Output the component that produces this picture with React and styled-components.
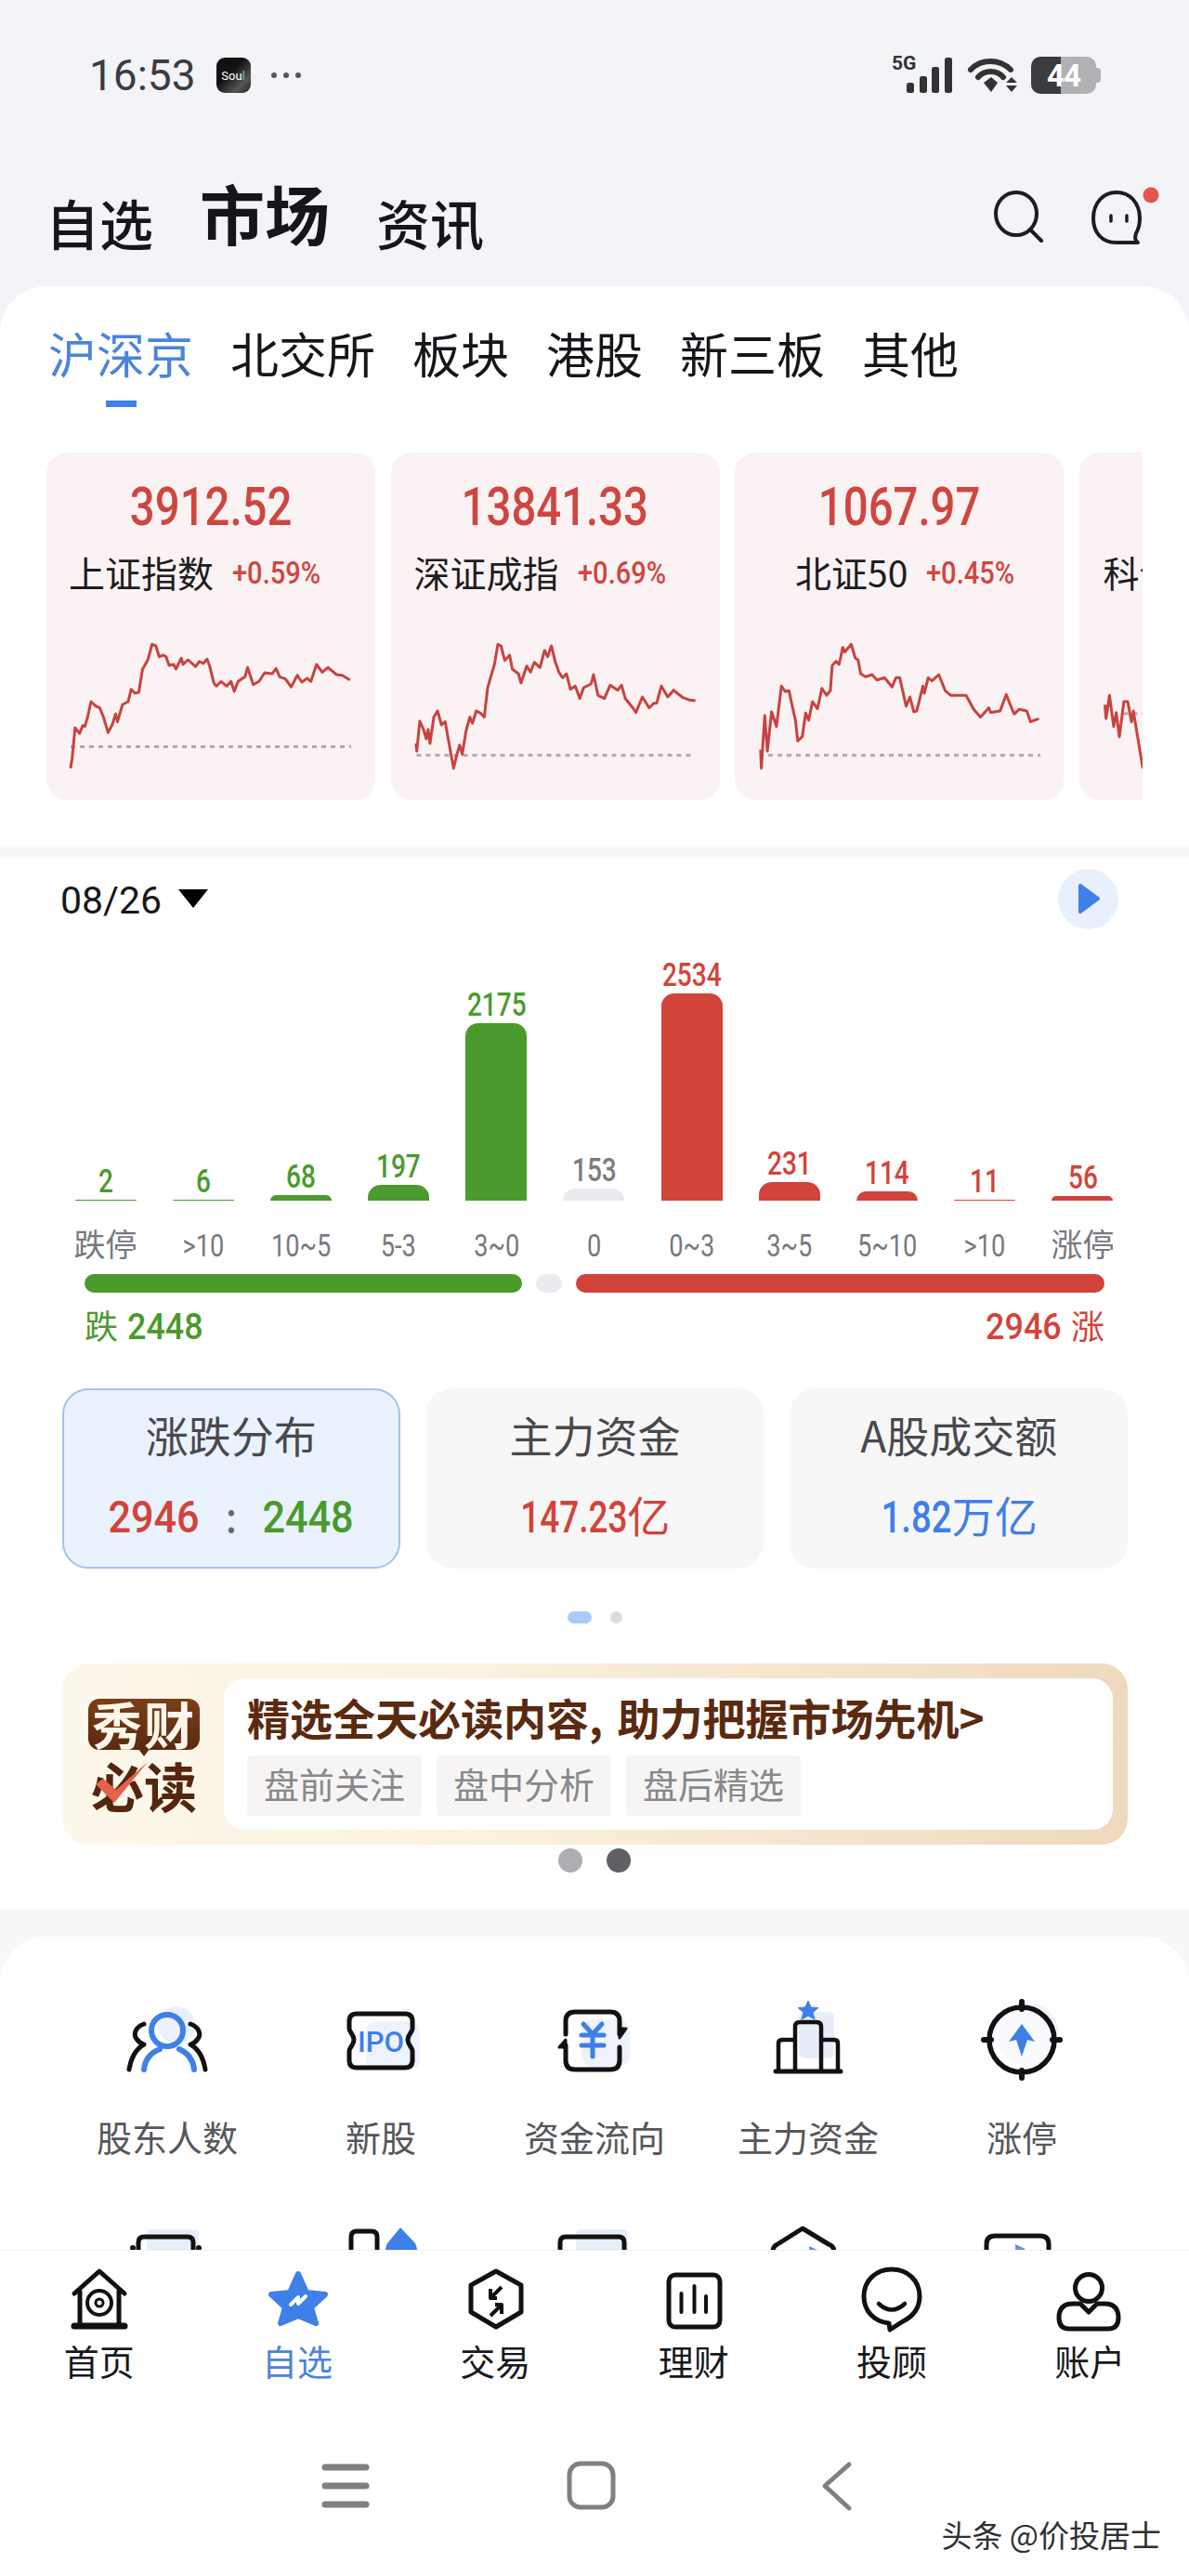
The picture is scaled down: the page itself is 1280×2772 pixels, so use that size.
import React from "react";
import styled, { createGlobalStyle } from "styled-components";

const BLUE = "#3f7fe8";
const RED = "#cf4640";
const GREEN = "#4a9a2d";
const INK = "#14161a";
const CJK = `"Noto Sans CJK SC", "Noto Sans", sans-serif`;
const NUM = `Roboto, "Noto Sans CJK SC", sans-serif`;

const GlobalStyle = createGlobalStyle`
  html, body {
    margin: 0;
    padding: 0;
    background: #fff;
  }
  * {
    box-sizing: border-box;
  }
`;

const Page = styled.div`
  position: relative;
  display: flex;
  flex-direction: column;
  width: 1280px;
  height: 2772px;
  overflow: hidden;
  background: #f2f4f8;
  font-family: ${CJK};
  color: ${INK};
`;

// the app's digits are a narrow DIN style face, none is installed so squeeze Roboto
const Condensed = styled.span`
  display: inline-block;
  transform: scaleX(${(p) => p.$x});
  transform-origin: ${(p) => p.$origin || "center"};
  margin: 0 ${(p) => -(p.$trim || 0)}px;
  font-family: ${NUM};
  font-weight: 500;
`;

const StatusBar = styled.div`
  display: flex;
  align-items: center;
  justify-content: space-between;
  height: 162px;
  padding: 0 100px 0 96px;
`;

const StatusSide = styled.div`
  display: flex;
  align-items: center;
`;

const Clock = styled.span`
  font-family: Roboto, sans-serif;
  font-size: 46px;
  line-height: 50px;
  color: #3a3c40;
`;

const SoulIcon = styled.span`
  display: flex;
  align-items: center;
  justify-content: center;
  width: 37px;
  height: 38px;
  margin-left: 22px;
  border-radius: 9px;
  background: linear-gradient(135deg, #111 40%, #555 75%, #222);
  color: #fff;
  font-family: Roboto, sans-serif;
  font-size: 13px;
  b {
    font-weight: 400;
    color: #3ed6b8;
  }
`;

const StatusDots = styled.span`
  display: flex;
  gap: 7px;
  margin-left: 22px;
  i {
    width: 6px;
    height: 6px;
    border-radius: 50%;
    background: #55575b;
  }
`;

const FiveG = styled.span`
  align-self: flex-start;
  width: 30px;
  margin-right: -14px;
  margin-top: -4px;
  font-family: Roboto, sans-serif;
  font-weight: 700;
  font-size: 21px;
  line-height: 22px;
  color: #333;
`;

const Battery = styled.span`
  position: relative;
  display: flex;
  align-items: center;
  justify-content: center;
  width: 70px;
  height: 40px;
  margin-left: 14px;
  border-radius: 10px;
  background: linear-gradient(90deg, #3b3c3f 46%, #b0b1b3 46%);
  color: #fff;
  font-family: Roboto, sans-serif;
  font-weight: 700;
  font-size: 33px;
  letter-spacing: -1px;
  &::after {
    content: "";
    position: absolute;
    right: -5px;
    top: 12px;
    width: 5px;
    height: 16px;
    border-radius: 0 4px 4px 0;
    background: #b0b1b3;
  }
`;

const Header = styled.div`
  display: flex;
  align-items: flex-end;
  height: 146px;
  padding: 0 41px 39px 49px;
`;

const HeaderTab = styled.span`
  font-size: ${(p) => (p.$active ? "70px" : "58px")};
  font-weight: ${(p) => (p.$active ? 700 : 500)};
  line-height: ${(p) => (p.$active ? "72px" : "60px")};
  margin-right: 50px;
  margin-bottom: ${(p) => (p.$active ? "4px" : "0")};
`;

const HeaderIcons = styled.div`
  display: flex;
  gap: 52px;
  margin-left: auto;
  margin-bottom: 4px;
`;

const IconFrame = styled.svg`
  display: block;
  flex: none;
  overflow: visible;
`;

const Sheet = styled.div`
  height: 603px;
  border-radius: 50px 50px 0 0;
  background: #fff;
`;

const MarketTabs = styled.div`
  display: flex;
  gap: 40px;
  padding: 47px 0 0 52px;
`;

const MarketTab = styled.div`
  display: flex;
  flex-direction: column;
  align-items: center;
  font-size: 52px;
  line-height: 50px;
  color: ${(p) => (p.$active ? "#4a84dc" : INK)};
  &::after {
    content: "";
    width: 33px;
    height: 7px;
    margin-top: 26px;
    background: ${(p) => (p.$active ? BLUE : "transparent")};
  }
`;

const IndexStrip = styled.div`
  display: flex;
  gap: 16.5px;
  width: 1180px;
  margin: 49px 0 0 50px;
  overflow: hidden;
`;

const IndexCard = styled.div`
  flex: none;
  width: 354px;
  height: 374px;
  padding-top: 21px;
  border-radius: 22px;
  background: #fbf2f3;
`;

const IndexValue = styled.div`
  height: 64px;
  text-align: center;
  font-size: 57px;
  line-height: 64px;
  color: ${RED};
`;

const IndexRow = styled.div`
  display: flex;
  align-items: center;
  gap: 20px;
  height: 44px;
  margin: 21px 0 3px;
  padding-left: ${(p) => p.$inset}px;
  white-space: nowrap;
`;

const IndexName = styled.span`
  font-size: 39px;
  line-height: 44px;
  color: #1c1d20;
`;

const IndexPct = styled.span`
  font-size: 33px;
  line-height: 44px;
  color: ${RED};
`;

const Band = styled.div`
  height: ${(p) => p.$h}px;
  background: #f8f8f8;
`;

const Board = styled.div`
  padding-bottom: 39px;
  background: #fff;
`;

const DateRow = styled.div`
  display: flex;
  align-items: center;
  height: 88px;
  padding: 0 76px 0 65px;
`;

const DateText = styled.span`
  margin-top: 3px;
  font-family: Roboto, sans-serif;
  font-size: 41px;
  color: #15171a;
`;

const DateCaret = styled.span`
  width: 0;
  height: 0;
  margin-left: 18px;
  border-left: 16px solid transparent;
  border-right: 16px solid transparent;
  border-top: 20px solid #000;
`;

const PlayButton = styled.span`
  display: flex;
  align-items: center;
  justify-content: center;
  width: 65px;
  height: 65px;
  margin-left: auto;
  border-radius: 50%;
  background: #e8f0fd;
`;

const BarGrid = styled.div`
  display: grid;
  grid-template-columns: repeat(11, 1fr);
  width: 1157px;
  margin-left: 61px;
`;

const BarColumn = styled.div`
  display: flex;
  flex-direction: column;
  align-items: center;
  justify-content: flex-end;
  height: 281px;
`;

const toneColor = (tone) => (tone === "up" ? "#d2433a" : tone === "down" ? GREEN : "#7a7c80");

const BarValue = styled.span`
  font-size: 35px;
  line-height: 38px;
  color: ${(p) => toneColor(p.$tone)};
`;

const Bar = styled.div`
  width: 66px;
  height: ${(p) => p.$h}px;
  border-radius: 14px 14px 0 0;
  background: ${(p) => (p.$tone === "flat" ? "#e9ebef" : toneColor(p.$tone))};
`;

const BarLabel = styled.span`
  height: 48px;
  margin-top: 22px;
  text-align: center;
  font-size: 34px;
  line-height: 48px;
  color: #77797d;
  ${Condensed} {
    font-weight: 400;
  }
`;

const Ratio = styled.div`
  display: flex;
  gap: 15px;
  height: 20px;
  margin: 9px 91px 0;
`;

const RatioPart = styled.div`
  flex: ${(p) => p.$grow} 0 0;
  border-radius: 10px;
  background: ${(p) => p.$color};
`;

const Totals = styled.div`
  display: flex;
  justify-content: space-between;
  height: 44px;
  margin: 11px 91px 0;
  font-size: 39px;
  line-height: 44px;
`;

const Total = styled.span`
  color: ${(p) => toneColor(p.$tone)};
  span {
    font-size: 36px;
  }
  ${Condensed} {
    font-size: 39px;
    margin: 0 10px;
  }
`;

const Metrics = styled.div`
  display: grid;
  grid-template-columns: repeat(3, 1fr);
  gap: 28px;
  margin: 48px 66px 0 67px;
`;

const Metric = styled.div`
  height: 194px;
  padding-top: 17px;
  border: 2px solid ${(p) => (p.$active ? "#a3c2ea" : "transparent")};
  border-radius: 28px;
  background: ${(p) => (p.$active ? "#eaf2fe" : "#f7f7f7")};
  text-align: center;
`;

const MetricTitle = styled.div`
  font-size: 46px;
  line-height: 60px;
  color: #48494d;
`;

const MetricValue = styled.div`
  margin-top: 28px;
  font-size: 46px;
  line-height: 56px;
  color: ${(p) => (p.$color ? p.$color : "#d2433a")};
  ${Condensed} {
    font-size: 48px;
  }
`;

const RatioMark = styled.span`
  margin: 0 22px;
  color: #666;
`;

const ToneText = styled.span`
  color: ${(p) => toneColor(p.$tone)};
`;

const Pager = styled.div`
  display: flex;
  justify-content: center;
  gap: ${(p) => p.$gap}px;
  margin-top: ${(p) => p.$top}px;
`;

const PagerDot = styled.span`
  width: ${(p) => p.$w}px;
  height: ${(p) => p.$h}px;
  border-radius: ${(p) => p.$h / 2}px;
  background: ${(p) => p.$color};
`;

const Banner = styled.div`
  display: flex;
  height: 195px;
  margin: 43px 66px 0 67px;
  padding: 16px 16px 16px 28px;
  border-radius: 28px;
  background: linear-gradient(90deg, #fdf8ec, #fbf1de 40%, #eed9bd);
`;

const Logo = styled.div`
  position: relative;
  flex: none;
  width: 120px;
  margin: 22px 26px 0 0;
  text-align: center;
  font-weight: 700;
`;

const LogoTop = styled.div`
  position: relative;
  height: 55px;
  border-radius: 12px;
  background: linear-gradient(180deg, #7a3f18, #5a2a10);
  color: #fff6ea;
  font-size: 54px;
  line-height: 53px;
  letter-spacing: 2px;
  white-space: nowrap;
  &::after {
    content: "";
    position: absolute;
    left: 50%;
    bottom: -7px;
    margin-left: -6px;
    width: 0;
    height: 0;
    border-left: 6px solid transparent;
    border-right: 6px solid transparent;
    border-top: 8px solid #5a2a10;
  }
`;

const LogoBottom = styled.div`
  margin-top: 8px;
  color: #54260f;
  font-size: 57px;
  line-height: 58px;
  white-space: nowrap;
`;

const LogoCheck = styled.svg`
  position: absolute;
  left: 4px;
  top: 62px;
`;

const BannerBody = styled.div`
  flex: 1;
  padding: 13px 0 0 25px;
  border-radius: 22px;
  background: #fff;
`;

const BannerTitle = styled.div`
  font-size: 46px;
  font-weight: 700;
  line-height: 56px;
  word-spacing: 5px;
  color: #5a2a10;
  white-space: nowrap;
`;

const Chips = styled.div`
  display: flex;
  gap: 16px;
  margin-top: 14px;
`;

const Chip = styled.span`
  width: 188px;
  height: 65px;
  border-radius: 4px;
  background: #f7f5f4;
  text-align: center;
  font-size: 38px;
  line-height: 60px;
  color: #87888c;
`;

const Tools = styled.div`
  flex: 1;
  min-height: 0;
  padding-top: 30px;
  overflow: hidden;
  background: #f8f8f8;
`;

const ToolSheet = styled.div`
  display: grid;
  grid-template-columns: repeat(5, 230px);
  row-gap: 65px;
  justify-items: center;
  padding: 67px 65px 0;
  border-radius: 50px 50px 0 0;
  background: #fff;
`;

const Tool = styled.div`
  display: flex;
  flex-direction: column;
  align-items: center;
`;

const ToolLabel = styled.span`
  margin-top: 33px;
  font-size: 38px;
  line-height: 50px;
  color: #55575b;
  white-space: nowrap;
`;

const Nav = styled.div`
  display: grid;
  grid-template-columns: repeat(6, 1fr);
  height: 170px;
  padding-top: 16px;
  border-top: 1px solid #eef0f3;
  background: #fff;
`;

const NavItem = styled.div`
  display: flex;
  flex-direction: column;
  align-items: center;
`;

const NavLabel = styled.span`
  margin-top: -3px;
  font-size: 38px;
  line-height: 50px;
  color: ${(p) => (p.$active ? "#4a84dc" : "#17181b")};
`;

const SystemBar = styled.div`
  display: flex;
  justify-content: center;
  gap: 204px;
  height: 181px;
  padding: 53px 8px 0 0;
  background: #fff;
`;

const Watermark = styled.span`
  position: absolute;
  right: 30px;
  bottom: 25px;
  font-size: 33px;
  line-height: 40px;
  color: #2e3033;
  white-space: nowrap;
`;

// points read off the reference, x is scaled to page px later
const line1 = [[88,560],[92,530],[100,430],[112,448],[120,422],[126,425],[133,395],[142,345],[155,360],[165,365],[175,395],[187,445],[198,420],[207,385],[212,410],[225,355],[240,345],[248,305],[258,318],[268,315],[278,240],[292,210],[303,160],[313,165],[322,200],[333,195],[340,200],[348,228],[360,225],[366,240],[380,205],[385,225],[398,210],[418,232],[428,215],[438,222],[448,208],[455,230],[466,285],[473,295],[485,280],[500,295],[511,280],[520,312],[530,280],[548,265],[555,235],[570,290],[585,280],[600,252],[620,255],[630,238],[640,265],[655,272],[670,298],[686,260],[698,282],[712,270],[722,280],[737,225],[752,250],[767,235],[790,258],[805,260],[825,275]];
const line2 = [[998,480],[1000,505],[1008,408],[1018,435],[1025,465],[1030,435],[1035,480],[1045,395],[1055,375],[1065,420],[1075,410],[1085,480],[1097,560],[1105,520],[1113,485],[1120,515],[1130,440],[1140,395],[1147,415],[1157,375],[1168,382],[1178,395],[1187,300],[1195,265],[1205,225],[1214,160],[1222,165],[1232,212],[1245,195],[1252,240],[1268,255],[1275,285],[1290,230],[1300,250],[1310,218],[1325,235],[1337,180],[1345,200],[1355,165],[1365,215],[1375,250],[1385,268],[1395,255],[1405,305],[1418,295],[1430,335],[1440,300],[1460,288],[1466,258],[1478,325],[1495,335],[1510,292],[1530,308],[1540,292],[1550,335],[1570,365],[1578,380],[1595,330],[1613,365],[1625,350],[1633,350],[1645,295],[1662,330],[1677,308],[1702,332],[1720,340],[1735,342]];
const line3 = [[1908,500],[1910,560],[1919,390],[1926,505],[1937,378],[1950,425],[1963,295],[1973,312],[1983,310],[1990,350],[2000,405],[2006,472],[2018,458],[2027,382],[2035,405],[2045,345],[2058,368],[2070,302],[2082,325],[2092,310],[2097,228],[2107,215],[2115,225],[2125,170],[2130,185],[2147,160],[2158,205],[2165,210],[2172,255],[2185,265],[2202,258],[2215,275],[2235,268],[2255,298],[2265,268],[2275,268],[2292,360],[2302,330],[2312,378],[2320,375],[2336,295],[2340,318],[2350,268],[2360,278],[2378,258],[2395,310],[2410,325],[2450,325],[2470,370],[2488,395],[2510,365],[2515,380],[2540,375],[2556,322],[2565,350],[2577,385],[2590,370],[2610,375],[2620,410],[2642,400]];
const line4 = [[2815,355],[2818,400],[2827,325],[2838,425],[2845,380],[2853,458],[2865,345],[2875,345],[2885,410],[2890,375],[2900,450],[2915,560]];

const indexCards = [
  { value: "3912.52", name: "上证指数", pct: "+0.59%", inset: 24, left: 50, line: line1, base: 803.5, dash: [76, 378] },
  { value: "13841.33", name: "深证成指", pct: "+0.69%", inset: 25, left: 420.5, line: line2, base: 812.7, dash: [448, 748] },
  { value: "1067.97", name: "北证50", pct: "+0.45%", inset: 65, left: 791, line: line3, base: 812.7, dash: [827, 1120] },
  { name: "科创综指", inset: 26, left: 1161.5, line: line4, base: 768, dash: [1209, 1500] },
];

const Spark = ({ card }) => {
  const pts = card.line.map(([x, y]) => `${(40 + x / 2.45 - card.left).toFixed(1)},${(y / 3).toFixed(1)}`).join(" ");
  const by = card.base - 640;
  return (
    <IconFrame width="354" height="220" viewBox="0 0 354 220" style={{ overflow: "hidden" }}>
      <line x1={card.dash[0] - card.left} x2={card.dash[1] - card.left} y1={by} y2={by} stroke="#a9abb0" strokeWidth="3" strokeDasharray="5 5" />
      <polyline points={pts} fill="none" stroke="#c8433f" strokeWidth="3" strokeLinejoin="round" />
    </IconFrame>
  );
};

const bars = [
  { value: "2", label: "跌停", h: 1, tone: "down", cjk: true },
  { value: "6", label: ">10", h: 1, tone: "down" },
  { value: "68", label: "10~5", h: 6, tone: "down" },
  { value: "197", label: "5-3", h: 17, tone: "down" },
  { value: "2175", label: "3~0", h: 191, tone: "down" },
  { value: "153", label: "0", h: 13, tone: "flat" },
  { value: "2534", label: "0~3", h: 223, tone: "up" },
  { value: "231", label: "3~5", h: 20, tone: "up" },
  { value: "114", label: "5~10", h: 10, tone: "up" },
  { value: "11", label: ">10", h: 1, tone: "up" },
  { value: "56", label: "涨停", h: 5, tone: "up", cjk: true },
];

const stroke = { fill: "none", stroke: "#111", strokeWidth: 5, strokeLinecap: "round", strokeLinejoin: "round" };
const blueStroke = { ...stroke, stroke: BLUE };

const ToolIcon = ({ children }) => (
  <IconFrame width="100" height="90" viewBox="0 0 100 90">{children}</IconFrame>
);

const NavIcon = ({ children }) => (
  <IconFrame width="80" height="80" viewBox="0 0 80 80">{children}</IconFrame>
);

const SearchIcon = () => (
  <IconFrame width="54" height="56" viewBox="0 0 54 56">
    <ellipse cx="25" cy="25" rx="22" ry="23" {...stroke} stroke="#1c1d20" strokeWidth="4" />
    <path d="M40 42 L52 54" {...stroke} stroke="#1c1d20" strokeWidth="4" />
  </IconFrame>
);

const ChatIcon = () => (
  <IconFrame width="64" height="60" viewBox="0 0 64 60">
    <path d="M27 2 C12 2 2 14 2 30 C2 46 12 56 26 56 L50 56 C46 53 47 50 48 46 C51 41 52 36 52 30 C52 14 42 2 27 2 Z" {...stroke} stroke="#1c1d20" strokeWidth="4" />
    <path d="M21 27 V33 M38 27 V33" {...stroke} stroke="#1c1d20" strokeWidth="3.5" />
    <circle cx="64" cy="5" r="8.5" fill="#e8544e" />
  </IconFrame>
);

const SignalIcon = () => (
  <IconFrame width="50" height="38" viewBox="0 0 50 38">
    <rect x="0" y="27" width="8" height="11" rx="2.5" fill="#333" />
    <rect x="14" y="20" width="8" height="18" rx="2.5" fill="#333" />
    <rect x="27" y="10" width="8" height="28" rx="2.5" fill="#333" />
    <rect x="41" y="0" width="8" height="38" rx="2.5" fill="#333" />
  </IconFrame>
);

const WifiIcon = () => (
  <IconFrame width="54" height="38" viewBox="0 0 54 38" style={{ marginLeft: 16 }}>
    <path d="M3 13 C14 1 34 1 46 13" fill="none" stroke="#333" strokeWidth="6" strokeLinecap="round" />
    <path d="M11 21 C18 13 31 13 38 21" fill="none" stroke="#333" strokeWidth="6" strokeLinecap="round" />
    <path d="M17 27 L25 21 L32 27 L25 37 Z" fill="#333" />
    <path d="M47 21 L53 27 H41 Z M41 30 H53 L47 37 Z" fill="#333" />
  </IconFrame>
);

const App = () => (
  <Page>
    <GlobalStyle />
    <StatusBar>
      <StatusSide>
        <Clock>16:53</Clock>
        <SoulIcon>Sou<b>l</b></SoulIcon>
        <StatusDots><i /><i /><i /></StatusDots>
      </StatusSide>
      <StatusSide>
        <FiveG>5G</FiveG>
        <SignalIcon />
        <WifiIcon />
        <Battery>44</Battery>
      </StatusSide>
    </StatusBar>

    <Header>
      <HeaderTab>自选</HeaderTab>
      <HeaderTab $active>市场</HeaderTab>
      <HeaderTab>资讯</HeaderTab>
      <HeaderIcons>
        <SearchIcon />
        <ChatIcon />
      </HeaderIcons>
    </Header>

    <Sheet>
      <MarketTabs>
        <MarketTab $active>沪深京</MarketTab>
        <MarketTab>北交所</MarketTab>
        <MarketTab>板块</MarketTab>
        <MarketTab>港股</MarketTab>
        <MarketTab>新三板</MarketTab>
        <MarketTab>其他</MarketTab>
      </MarketTabs>
      <IndexStrip>
        {indexCards.map((card) => (
          <IndexCard key={card.name}>
            <IndexValue>{card.value && <Condensed $x={0.83}>{card.value}</Condensed>}</IndexValue>
            <IndexRow $inset={card.inset}>
              <IndexName>{card.name}</IndexName>
              {card.pct && (
                <IndexPct>
                  <Condensed $x={0.88} $origin="left">{card.pct}</Condensed>
                </IndexPct>
              )}
            </IndexRow>
            <Spark card={card} />
          </IndexCard>
        ))}
      </IndexStrip>
    </Sheet>
    <Band $h={12} />

    <Board>
      <DateRow>
        <DateText>08/26</DateText>
        <DateCaret />
        <PlayButton>
          <IconFrame width="26" height="34" viewBox="0 0 26 34">
            <path d="M4 3 L23 17 L4 31 Z" fill={BLUE} stroke={BLUE} strokeWidth="4" strokeLinejoin="round" />
          </IconFrame>
        </PlayButton>
      </DateRow>
      <BarGrid>
        {bars.map((b) => (
          <BarColumn key={b.label + b.value}>
            <BarValue $tone={b.tone}>
              <Condensed $x={0.8}>{b.value}</Condensed>
            </BarValue>
            <Bar $h={b.h} $tone={b.tone} />
          </BarColumn>
        ))}
        {bars.map((b) => (
          <BarLabel key={b.value}>
            {b.cjk ? b.label : <Condensed $x={0.8}>{b.label}</Condensed>}
          </BarLabel>
        ))}
      </BarGrid>
      <Ratio>
        <RatioPart $grow={472} $color={GREEN} />
        <RatioPart $grow={28} $color="#e9ebef" />
        <RatioPart $grow={570} $color="#d2433a" />
      </Ratio>
      <Totals>
        <Total $tone="down"><span>跌</span><Condensed $x={0.92} $origin="left">2448</Condensed></Total>
        <Total $tone="up"><Condensed $x={0.92} $origin="right">2946</Condensed><span>涨</span></Total>
      </Totals>

      <Metrics>
        <Metric $active>
          <MetricTitle>涨跌分布</MetricTitle>
          <MetricValue>
            <ToneText $tone="up"><Condensed $x={0.9}>2946</Condensed></ToneText>
            <RatioMark>:</RatioMark>
            <ToneText $tone="down"><Condensed $x={0.9}>2448</Condensed></ToneText>
          </MetricValue>
        </Metric>
        <Metric>
          <MetricTitle>主力资金</MetricTitle>
          <MetricValue><Condensed $x={0.77} $trim={17}>147.23</Condensed>亿</MetricValue>
        </Metric>
        <Metric>
          <MetricTitle>A股成交额</MetricTitle>
          <MetricValue $color={BLUE}><Condensed $x={0.8} $trim={9}>1.82</Condensed>万亿</MetricValue>
        </Metric>
      </Metrics>
      <Pager $gap={20} $top={46}>
        <PagerDot $w={26} $h={13} $color="#a9cbf8" />
        <PagerDot $w={13} $h={13} $color="#dcdcdc" />
      </Pager>

      <Banner>
        <Logo>
          <LogoTop>秀财</LogoTop>
          <LogoBottom>必读</LogoBottom>
          <LogoCheck width="66" height="58" viewBox="0 0 66 58">
            <path d="M4 30 L24 50 L60 6 L26 36 L12 24 Z" fill="#e5614c" />
          </LogoCheck>
        </Logo>
        <BannerBody>
          <BannerTitle>精选全天必读内容, 助力把握市场先机&gt;</BannerTitle>
          <Chips>
            <Chip>盘前关注</Chip>
            <Chip>盘中分析</Chip>
            <Chip>盘后精选</Chip>
          </Chips>
        </BannerBody>
      </Banner>
      <Pager $gap={26} $top={4}>
        <PagerDot $w={26} $h={26} $color="#adadb2" />
        <PagerDot $w={26} $h={26} $color="#5f6066" />
      </Pager>
    </Board>

    <Tools>
      <ToolSheet>
        <Tool>
          <ToolIcon>
            <circle cx="60" cy="28" r="20" fill="#eaf1fc" />
            <circle cx="50" cy="34" r="17" {...blueStroke} strokeWidth="6" />
            <path d="M25 76 C26 66 32 58 42 54 M63 54 C72 58 78 66 79 76" {...blueStroke} strokeWidth="6" />
            <path d="M25 27 C16 30 13 38 17 43 C19 46 22 48 25 49 C16 54 11 64 9 76" {...stroke} />
            <path d="M75 27 C84 30 87 38 83 43 C81 46 78 48 75 49 C84 54 89 64 91 76" {...stroke} />
          </ToolIcon>
          <ToolLabel>股东人数</ToolLabel>
        </Tool>
        <Tool>
          <ToolIcon>
            <rect x="34" y="24" width="58" height="52" rx="10" fill="#edf2fb" />
            <path d="M24 16 H76 Q84 16 84 24 V32 C84 36 79 38 79 44 C79 50 84 52 84 56 V66 Q84 74 76 74 H24 Q16 74 16 66 V56 C16 52 21 50 21 44 C21 38 16 36 16 32 V24 Q16 16 24 16 Z" {...stroke} />
            <text x="50" y="57" textAnchor="middle" fontFamily="Roboto, sans-serif" fontWeight="500" fontSize="31" textLength="50" lengthAdjust="spacingAndGlyphs" fill={BLUE}>IPO</text>
          </ToolIcon>
          <ToolLabel>新股</ToolLabel>
        </Tool>
        <Tool>
          <ToolIcon>
            <rect x="36" y="22" width="52" height="52" rx="14" fill="#edf2fb" />
            <path d="M19 38 V24 Q19 14 29 14 H67 Q77 14 77 24 V38 M77 52 V66 Q77 76 67 76 H29 Q19 76 19 66 V50" {...stroke} />
            <path d="M77 42 L84 32 H77 Z M19 44 L12 52 H19 Z" fill="#111" stroke="#111" strokeWidth="3" strokeLinejoin="round" />
            <path d="M38 27 L48 38 L58 27 M36 39 H60 M36 50 H60 M48 38 V62" {...blueStroke} strokeWidth="5" />
          </ToolIcon>
          <ToolLabel>资金流向</ToolLabel>
        </Tool>
        <Tool>
          <ToolIcon>
            <rect x="40" y="14" width="38" height="50" rx="6" fill="#e7edf9" />
            <path d="M18 78 V48 Q18 44 22 44 H36 M82 78 V48 Q82 44 78 44 H64 M36 78 V30 Q36 25 41 25 H59 Q64 25 64 30 V78" {...stroke} strokeWidth="4.5" strokeLinecap="butt" />
            <path d="M15 78 H85" {...stroke} strokeWidth="5" />
            <path d="M50 2 L53 9 L61 9.5 L55 14.5 L57 22 L50 18 L43 22 L45 14.5 L39 9.5 L47 9 Z" fill={BLUE} stroke={BLUE} strokeWidth="1" strokeLinejoin="round" />
          </ToolIcon>
          <ToolLabel>主力资金</ToolLabel>
        </Tool>
        <Tool>
          <ToolIcon>
            <circle cx="56" cy="38" r="34" fill="#eef3fb" />
            <circle cx="50" cy="44" r="35" {...stroke} fill="#fff" fillOpacity="0.6" strokeWidth="5.5" />
            <path d="M50 3 V11 M50 77 V85 M9 44 H17 M83 44 H91" {...stroke} strokeWidth="6" />
            <path d="M50 27 L64 46 L56 44 L50 62 L44 44 L36 46 Z" fill={BLUE} />
          </ToolIcon>
          <ToolLabel>涨停</ToolLabel>
        </Tool>

        <Tool>
          <ToolIcon>
            <rect x="28" y="10" width="56" height="30" rx="4" fill="#e7eefb" />
            <path d="M19 50 V24 Q19 18 25 18 H72 Q78 18 78 24 V50" {...stroke} />
            <circle cx="13" cy="30" r="3" fill="#111" />
            <circle cx="84" cy="30" r="3" fill="#111" />
          </ToolIcon>
        </Tool>
        <Tool>
          <ToolIcon>
            <path d="M18 50 V18 Q18 12 24 12 H40 Q46 12 46 18 V50" {...stroke} />
            <path d="M71 8 L87 25 Q90 30 90 50 H54 Q54 30 57 25 Z" fill={BLUE} />
          </ToolIcon>
        </Tool>
        <Tool>
          <ToolIcon>
            <rect x="30" y="10" width="56" height="30" rx="4" fill="#e7eefb" />
            <path d="M13 50 V24 Q13 18 19 18 H76 Q82 18 82 24 V50" {...stroke} />
          </ToolIcon>
        </Tool>
        <Tool>
          <ToolIcon>
            <path d="M12 34 Q12 28 17 26 L44 9 L72 26 Q78 28 78 34 V50" {...stroke} />
            <path d="M12 34 V50" {...stroke} />
            <path d="M51 28 L62 33 L51 38 Z" fill="#6f93c9" />
          </ToolIcon>
        </Tool>
        <Tool>
          <ToolIcon>
            <path d="M12 50 V26 Q12 17 21 17 H70 Q79 17 79 26 V50" {...stroke} />
            <path d="M43 26 L54 31 L43 36 Z" fill="#6f93c9" />
          </ToolIcon>
        </Tool>
      </ToolSheet>
    </Tools>

    <Nav>
      <NavItem>
        <NavIcon>
          <path d="M13 30 L40 6 L67 30 M19 28 V64 M61 28 V64" {...stroke} />
          <path d="M13 65 H67" {...stroke} strokeWidth="7" />
          <circle cx="40" cy="40" r="13" {...stroke} strokeWidth="4" />
          <circle cx="40" cy="40" r="4" {...stroke} strokeWidth="3" />
        </NavIcon>
        <NavLabel>首页</NavLabel>
      </NavItem>
      <NavItem>
        <NavIcon>
          <path d="M41 9 L50 29 L70 31 L55 45 L60 62 L41 54 L22 62 L27 45 L12 31 L32 29 Z" fill={BLUE} stroke={BLUE} strokeWidth="6" strokeLinejoin="round" />
          <path d="M33 42 L41 34 L41 41 L49 33" fill="none" stroke="#fff" strokeWidth="4" strokeLinecap="round" strokeLinejoin="round" />
        </NavIcon>
        <NavLabel $active>自选</NavLabel>
      </NavItem>
      <NavItem>
        <NavIcon>
          <path d="M41 6 L68 21 V50 L41 66 L14 50 V21 Z" {...stroke} />
          <path d="M47 23 L35 35 M35 25 V35 H42 M35 54 L47 42 M47 52 V42 H40" {...stroke} strokeWidth="4" strokeLinecap="butt" />
        </NavIcon>
        <NavLabel>交易</NavLabel>
      </NavItem>
      <NavItem>
        <NavIcon>
          <rect x="13" y="10" width="55" height="56" rx="7" {...stroke} />
          <path d="M26.5 30 V50 M40.5 22 V50 M53 33 V50" {...stroke} strokeWidth="4" />
        </NavIcon>
        <NavLabel>理财</NavLabel>
      </NavItem>
      <NavItem>
        <NavIcon>
          <path d="M37 62 C20 60 10 48 10 33 C10 16 23 4 40 4 C57 4 70 16 70 33 C70 46 62 55 52 60 L38 69 Z" {...stroke} />
          <path d="M26 41 Q40 54 54 41" {...stroke} strokeWidth="4.5" />
        </NavIcon>
        <NavLabel>投顾</NavLabel>
      </NavItem>
      <NavItem>
        <NavIcon>
          <circle cx="39" cy="24" r="14.5" {...stroke} />
          <path d="M30 41 L39 50 L48 41 H56 Q71 41 71 56 Q71 68 60 68 H18 Q7 68 7 56 Q7 41 22 41 Z" {...stroke} />
        </NavIcon>
        <NavLabel>账户</NavLabel>
      </NavItem>
    </Nav>

    <SystemBar>
      <IconFrame width="60" height="60" viewBox="0 0 60 60">
        <path d="M8 11 H52 M8 31 H52 M8 51 H52" fill="none" stroke="#808080" strokeWidth="7" strokeLinecap="round" />
      </IconFrame>
      <IconFrame width="60" height="60" viewBox="0 0 60 60">
        <rect x="7" y="7" width="47" height="47" rx="12" fill="none" stroke="#808080" strokeWidth="5" />
      </IconFrame>
      <IconFrame width="60" height="60" viewBox="0 0 60 60">
        <path d="M44 8 L18 31 L44 55" fill="none" stroke="#808080" strokeWidth="5" strokeLinecap="round" strokeLinejoin="round" />
      </IconFrame>
    </SystemBar>
    <Watermark>头条 @价投居士</Watermark>
  </Page>
);

export default App;
